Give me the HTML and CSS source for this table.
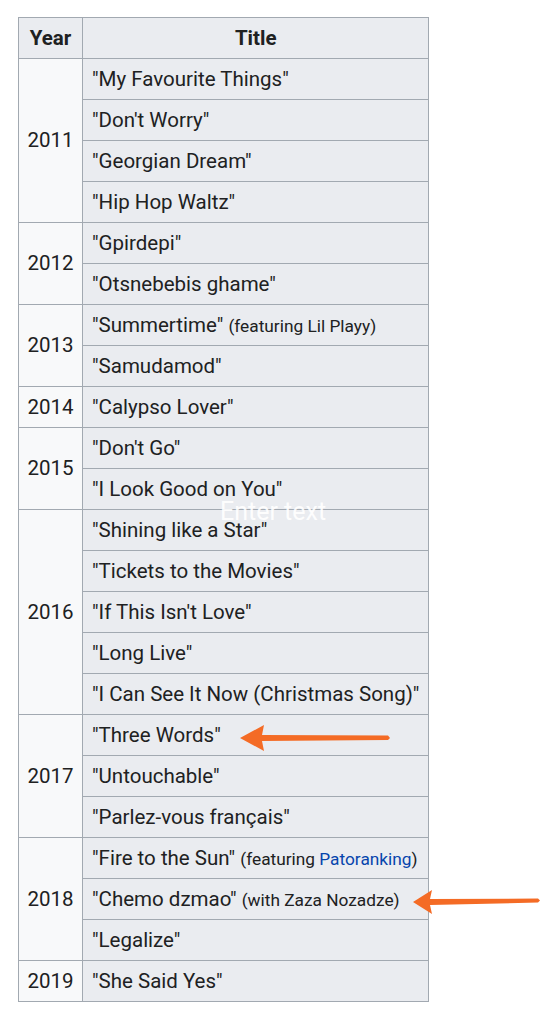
FILE: index.html
```html
<!DOCTYPE html>
<html>
<head>
<meta charset="utf-8">
<link rel="stylesheet" href="styles.css">
</head>
<body>
<div class="page">
<table class="disc">
  <thead>
    <tr><th class="year">Year</th><th class="title">Title</th></tr>
  </thead>
  <tbody>
    <tr><td class="year" rowspan="4">2011</td><td>"My Favourite Things"</td></tr>
    <tr><td>"Don't Worry"</td></tr>
    <tr><td>"Georgian Dream"</td></tr>
    <tr><td>"Hip Hop Waltz"</td></tr>
    <tr><td class="year" rowspan="2">2012</td><td>"Gpirdepi"</td></tr>
    <tr><td>"Otsnebebis ghame"</td></tr>
    <tr><td class="year" rowspan="2">2013</td><td>"Summertime" <small>(featuring Lil Playy)</small></td></tr>
    <tr><td>"Samudamod"</td></tr>
    <tr><td class="year">2014</td><td>"Calypso Lover"</td></tr>
    <tr><td class="year" rowspan="2">2015</td><td>"Don't Go"</td></tr>
    <tr><td>"I Look Good on You"</td></tr>
    <tr><td class="year" rowspan="5">2016</td><td>"Shining like a Star"</td></tr>
    <tr><td>"Tickets to the Movies"</td></tr>
    <tr><td>"If This Isn't Love"</td></tr>
    <tr><td>"Long Live"</td></tr>
    <tr><td>"I Can See It Now (Christmas Song)"</td></tr>
    <tr><td class="year" rowspan="3">2017</td><td>"Three Words"</td></tr>
    <tr><td>"Untouchable"</td></tr>
    <tr><td>"Parlez-vous français"</td></tr>
    <tr><td class="year" rowspan="3">2018</td><td>"Fire to the Sun" <small>(featuring <a href="#">Patoranking</a>)</small></td></tr>
    <tr><td>"Chemo dzmao" <small>(with Zaza Nozadze)</small></td></tr>
    <tr><td>"Legalize"</td></tr>
    <tr><td class="year">2019</td><td>"She Said Yes"</td></tr>
  </tbody>
</table>
<div class="overlay-text">Enter text</div>
<svg class="arrow arrow-1" width="160" height="30" viewBox="0 0 160 30">
  <path d="M0 14 L24 1 L22 11 L148 11.5 L150 14 L148 16 L22 17 L24 27 Z" fill="#f46b25"/>
</svg>
<svg class="arrow arrow-2" width="135" height="28" viewBox="0 0 135 28">
  <path d="M0 13 L19 1 L17 10 L125 9.5 L127 11.5 L125 13.5 L17 16 L19 25 Z" fill="#f46b25"/>
</svg>
</div>
</body>
</html>
```
FILE: styles.css
```css
html, body {
  margin: 0;
  padding: 0;
  background: #ffffff;
}
.page {
  position: relative;
  width: 556px;
  height: 1024px;
  padding: 17px 0 0 18px;
  box-sizing: border-box;
  font-family: Roboto, "Liberation Sans", sans-serif;
}
.disc {
  border-collapse: collapse;
  border: 1px solid #a2a9b1;
  color: #202122;
  font-size: 20.5px;
}
.disc th, .disc td {
  border: 1px solid #a2a9b1;
  height: 41px;
  padding: 0 9px;
  box-sizing: border-box;
  background: #eaecf0;
  text-align: left;
  white-space: nowrap;
  line-height: 1;
}
.disc th {
  font-weight: 700;
  text-align: center;
}
.disc th.year {
  width: 64px;
  padding: 0;
}
.disc td.year {
  background: #f8f9fa;
  text-align: center;
  padding: 0;
  width: 64px;
}
.disc small {
  font-size: 17.3px;
}
.disc a {
  color: #0645ad;
  text-decoration: none;
}
.overlay-text {
  position: absolute;
  left: 220px;
  top: 497px;
  color: rgba(255, 255, 255, 0.92);
  font-size: 25px;
  line-height: 30px;
  font-family: Roboto, "Liberation Sans", sans-serif;
}
.arrow {
  position: absolute;
}
.arrow-1 {
  left: 240px;
  top: 724px;
}
.arrow-2 {
  left: 413px;
  top: 889px;
}
```
